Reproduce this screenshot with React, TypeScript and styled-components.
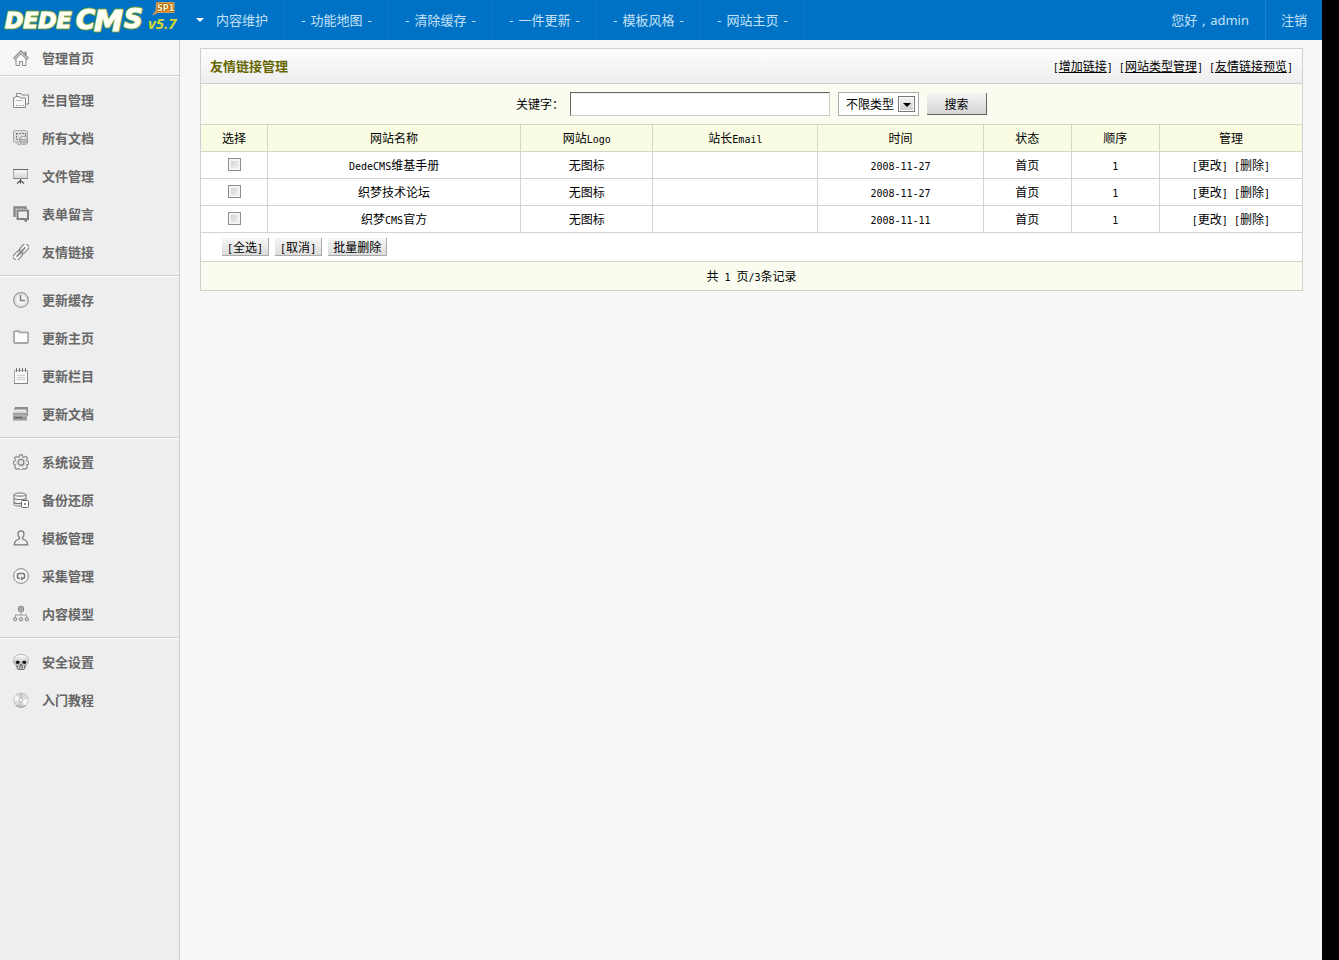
import React from "react";
import styled, { createGlobalStyle } from "styled-components";

const UI = `"Noto Sans", "Noto Sans CJK SC", sans-serif`;
const SONG = `"Noto Sans CJK SC", sans-serif`;

const GlobalStyle = createGlobalStyle`
  *, *::before, *::after { box-sizing: border-box; }
  body { margin: 0; background: #f7f7f7; font: 12px/18px ${SONG}; color: #000; }
  a { color: inherit; text-decoration: none; }
  button, input, select { font: inherit; color: inherit; margin: 0; }
`;

const Page = styled.div`
  display: grid;
  grid-template-columns: 1fr 17px;
  min-height: 100vh;
`;

const Gutter = styled.div`
  background: #000;
`;

const Shell = styled.div`
  display: grid;
  grid-template-columns: 180px 1fr;
  grid-template-rows: 40px 1fr;
  min-width: 0;
`;

const Header = styled.header`
  grid-column: 1 / -1;
  display: flex;
  background: #0072c6;
  color: #c5e1f5;
  font: 13px/40px ${UI};
`;

const LogoLink = styled.a`
  width: 180px;
  height: 40px;
  flex: none;
  svg { display: block; }
`;

const Nav = styled.nav`
  display: flex;
  flex: 1;
`;

const NavItem = styled.a`
  display: flex;
  align-items: center;
  justify-content: center;
  gap: ${(p: { $first?: boolean }) => (p.$first ? "12px" : "5px")};
  min-width: 104px;
  padding: 0 16px;
  border-right: 1px solid #0a7bce;
  white-space: nowrap;
`;

const Caret = styled.span`
  border: 4px solid transparent;
  border-top-color: #fff;
  border-bottom: 0;
`;

const UserArea = styled.div`
  display: flex;
  white-space: nowrap;
`;

const UserText = styled.span`
  padding: 0 16px;
`;

const Comma = styled.span`
  display: inline-block;
  width: 13px;
  text-align: center;
`;

const LogoutLink = styled.a`
  padding: 0 15px;
  border-left: 1px solid #1a80cc;
`;

const Sidebar = styled.aside`
  background: #eee;
  border-right: 1px solid #ccc;
  font: bold 13px/20px ${UI};
  color: #666;
`;

const MenuGroup = styled.ul<{ $home?: boolean; $last?: boolean }>`
  list-style: none;
  margin: 0;
  padding: ${(p) => (p.$home ? "0" : "4px 0")};
  background: ${(p) => (p.$home ? "#f7f7f7" : "transparent")};
  border-top: ${(p) => (p.$home ? "0" : "1px solid #fff")};
  border-bottom: ${(p) => (p.$last ? "0" : "1px solid #ccc")};
`;

const MenuLink = styled.a<{ $home?: boolean }>`
  display: flex;
  align-items: center;
  gap: 13px;
  height: ${(p) => (p.$home ? "35px" : "38px")};
  padding-left: 13px;
  svg { flex: none; }
`;

const Main = styled.main`
  padding: 8px 19px 20px 20px;
  min-width: 0;
  background: #f7f7f7;
`;

const Panel = styled.section`
  border: 1px solid #d0d0d0;
  background: #fff;
`;

const PanelHead = styled.div`
  display: flex;
  align-items: center;
  justify-content: space-between;
  height: 35px;
  padding: 0 9px;
  background: linear-gradient(#fdfdfd, #eee);
  border-bottom: 1px solid #d0d0d0;
`;

const Title = styled.h1`
  margin: 0;
  font: bold 13px/20px ${SONG};
  color: #660;
`;

const HeadLinks = styled.div`
  display: flex;
  gap: 6px;
  a { text-decoration: underline; }
`;

const SearchBar = styled.form`
  display: flex;
  align-items: center;
  justify-content: center;
  height: 41px;
  gap: 8px;
  background: #f9fcef;
  border-bottom: 1px solid #d3d8ca;
`;

const KeywordLabel = styled.label`
  display: flex;
  align-items: center;
  gap: 6px;
`;

const KeywordInput = styled.input`
  width: 260px;
  height: 24px;
  padding: 0 4px;
  background: #fff;
  border: 1px solid #ccc;
  border-top-color: #666;
  border-left-color: #666;
  box-shadow: inset 0 1px 0 #eee;
  outline: none;
`;

const SelectBox = styled.div`
  position: relative;
  width: 81px;
  height: 24px;
`;

const TypeSelect = styled.select`
  appearance: none;
  width: 100%;
  height: 100%;
  padding: 0 20px 0 7px;
  background: #fff;
  border: 1px solid #aaa;
  border-radius: 0;
`;

const SelectArrow = styled.span`
  position: absolute;
  top: 4px;
  right: 4px;
  display: flex;
  align-items: center;
  justify-content: center;
  width: 17px;
  height: 16px;
  padding-top: 2px;
  border: 1px solid #777;
  background: linear-gradient(#f4f4f4, #ccc);
  box-shadow: inset 0 0 0 1px #fff;
  pointer-events: none;
  &::after {
    content: "";
    border: 4px solid transparent;
    border-top-color: #000;
    border-bottom: 0;
  }
`;

const SearchButton = styled.button`
  width: 60px;
  height: 22px;
  padding: 0;
  background: linear-gradient(#f6f6f6, #d4d4d4);
  border: solid #666;
  border-width: 0 1px 1px 0;
`;

const LinkTable = styled.table`
  width: 100%;
  table-layout: fixed;
  border-collapse: separate;
  border-spacing: 0;
  text-align: center;
  th, td {
    height: 27px;
    padding: 0;
    font-weight: normal;
    border-bottom: 1px solid #d3d3d3;
    border-right: 1px solid #d3d3d3;
  }
  th { background: #f9fbe3; border-color: #d3d8ca; }
  th:last-child, td:last-child { border-right: 0; }
`;

const Col = styled.col<{ $width: string }>`
  width: ${(p) => p.$width};
`;

const Check = styled.input`
  appearance: none;
  display: block;
  width: 13px;
  height: 13px;
  margin: 0 auto 1px;
  border: 1px solid #8e8f8f;
  background: linear-gradient(135deg, #ccc, #f6f6f6);
  box-shadow: inset 0 0 0 2px #f4f4f4;
  &:checked { background: #678; }
`;

const RowActions = styled.span`
  display: inline-flex;
  gap: 6px;
`;

const BatchBar = styled.div`
  display: flex;
  align-items: center;
  gap: 6px;
  height: 29px;
  padding-left: 21px;
  border-bottom: 1px solid #d3d8ca;
`;

const BatchButton = styled.button`
  height: 18px;
  padding: 0 5px;
  line-height: 16px;
  background: linear-gradient(#f6f6f6, #dcdcdc);
  border: solid #aaa;
  border-width: 0 1px 1px 0;
`;

const Pager = styled.div`
  display: flex;
  align-items: center;
  justify-content: center;
  height: 28px;
  background: #f9fcef;
`;

const Latin = styled.span`
  font-family: "DejaVu Sans Mono", monospace;
  font-size: 10px;
  line-height: 0;
  white-space: pre;
`;

/* Sets half-width characters in a mono face that is half as wide as a 12px ideograph. */
function Mixed({ children }: { children: string }) {
  const parts = children.split(/([\x20-\x7e]+)/).filter(Boolean);
  return (
    <span>
      {parts.map((part, i) =>
        /^[\x20-\x7e]/.test(part) ? <Latin key={i}>{part}</Latin> : part
      )}
    </span>
  );
}

function BracketLink({ children }: { children: string }) {
  return (
    <span>
      <Latin>[</Latin>
      <a href="#">{children}</a>
      <Latin>]</Latin>
    </span>
  );
}

function LogoWord() {
  return (
    <>
      <text x="5" y="28" fontSize="22">DEDE</text>
      <text x="76" y="29" fontSize="26">C</text>
      <text x="94" y="31" fontSize="29">M</text>
      <text x="124" y="28" fontSize="26">S</text>
    </>
  );
}

function Logo() {
  return (
    <svg width="180" height="40" viewBox="0 0 180 40" role="img" aria-label="DEDECMS v5.7 SP1">
      <g
        fontFamily="DejaVu Sans, sans-serif"
        fontWeight="bold"
        fontStyle="italic"
        fill="#fffef2"
        stroke="#6b9a3c"
        strokeWidth="3"
        paintOrder="stroke"
        strokeLinejoin="round"
      >
        <LogoWord />
      </g>
      <g
        aria-hidden="true"
        fontFamily="DejaVu Sans, sans-serif"
        fontWeight="bold"
        fontStyle="italic"
        fill="#fffef2"
        stroke="#fffef2"
        strokeWidth="1"
      >
        <LogoWord />
      </g>
      <text x="148" y="29" fontFamily="Open Sans, sans-serif" fontSize="15" fontWeight="bold" fontStyle="italic" fill="#d3d92f">
        v5.7
      </text>
      <path d="M156.500 2.500h17.500v10h-16.500l-4.500 2.500 3-4z" fill="#f08a1d" stroke="#c9a35a" />
      <text x="157" y="10.500" fontFamily="DejaVu Sans, sans-serif" fontSize="8" fontWeight="bold" fill="#fff3c4" stroke="#7a4a10" strokeWidth="1" paintOrder="stroke">
        SP1
      </text>
    </svg>
  );
}

const icons: Record<string, React.ReactNode> = {
  home: (
    <>
      <path d="M3 8.500V15.500h3.500v-4h3v4H13V8.500L8 3.500z" fill="#fafafa" stroke="#888" />
      <path d="M12.500 1.500v4" stroke="#888" strokeWidth="2" />
      <path d="M1 9 8 2l7 7" stroke="#808080" strokeWidth="3" />
      <path d="M1.500 8.700 8 2.300l6.500 6.400" stroke="#d4d4d4" strokeWidth="1.200" />
    </>
  ),
  folders: (
    <>
      <path d="M3.500 5V1.500H8l1 1.500h6.500v9H13" fill="#f4f4f4" stroke="#888" />
      <path d="M.5 15.500v-10H2l.5-1h4l.8 1.500h5.200v9.500z" fill="#f8f8f8" stroke="#888" />
      <path d="M3 8.500h7" stroke="#bbb" />
      <path d="M3 13.500h2m1.500 0h1.500m1.500 0h1.500" stroke="#999" />
    </>
  ),
  docs: (
    <>
      <rect x=".5" y=".5" width="14" height="11.500" rx="1" fill="#ddd" stroke="#aaa" />
      <path d="M3 3.500h10M3.500 3v6.500h4M12.500 4v3" stroke="#777" strokeDasharray="2 1" />
      <path d="M7 8v4.500c0 2.500 7.500 2.500 7.500 0V8" fill="#ccc" stroke="#999" />
      <ellipse cx="10.700" cy="8" rx="3.700" ry="1.500" fill="#eee" stroke="#888" strokeWidth=".8" />
      <path d="M3 12.500c1 1.500 2.500 2 4.500 2M7 11c1 1.300 6 1.300 7.500 0" stroke="#999" />
    </>
  ),
  screen: (
    <>
      <rect x=".5" y="1.500" width="14" height="9" fill="url(#panelShade)" stroke="#aaa" />
      <path d="M0 1.500h15" stroke="#666" />
      <path d="M0 10.500h15" stroke="#888" />
      <path d="M7.500 11v4.500M7.500 12.500 4 15.500M7.500 12.500l3.500 3" stroke="#555" strokeWidth="1.200" />
    </>
  ),
  comments: (
    <>
      <path d="M1.500 11V1.500h11v1.500" stroke="#888" strokeWidth="2.500" />
      <path d="M4.500 4.500h10.500v8.500h-2v2l-2-2H4.500z" fill="#eee" stroke="#808080" strokeWidth="2" />
    </>
  ),
  link: (
    <g transform="rotate(-47 8 8)">
      <rect x="-1.500" y="4.800" width="9.500" height="6.400" rx="2" fill="#fafafa" stroke="#777" />
      <rect x="8" y="4.800" width="9.500" height="6.400" rx="2" fill="#fafafa" stroke="#777" />
      <path d="M1.500 8h13" stroke="#888" strokeWidth="1.800" />
      <path d="M5 6.300h6M5 9.700h6" stroke="#999" strokeWidth=".8" />
    </g>
  ),
  clock: (
    <>
      <circle cx="8" cy="8" r="7.300" fill="#f3f3f3" stroke="#999" strokeWidth="1.300" />
      <circle cx="8" cy="8" r="5.500" stroke="#ddd" />
      <path d="M7.500 3v5.500H12" stroke="#808080" strokeWidth="1.500" />
    </>
  ),
  folder: (
    <path d="M1 12.500V2.500Q1 1.200 2.200 1.200H5.500q1 0 1 1.200h7.500q1.200 0 1.200 1.300v8q0 1.300-1.300 1.300H2.300Q1 13 1 12.500z" fill="#fdfdfd" stroke="#a6a6a6" strokeWidth="1.800" />
  ),
  notepad: (
    <>
      <path d="M1.500 2.500h13v13h-13z" fill="#f8f8f8" stroke="#aaa" />
      <path d="M1 15.500h14M14.500 4v12" stroke="#888" />
      <path d="M3.500 0v4M6.500 0v4M9.500 0v4M12.500 0v4" stroke="#777" />
      <path d="M4 7.500h8M4 9.500h8M4 11.500h8" stroke="#ccc" />
    </>
  ),
  cards: (
    <>
      <path d="M2 1h13v9h-2V4H1z" fill="#8c8c8c" />
      <path d="M2.500 3.500H14" stroke="#bbb" />
      <rect x="0" y="5" width="14" height="9.500" fill="#999" />
      <path d="M0 6h14" stroke="#eee" strokeWidth="1.500" />
      <path d="M0 9.500h14" stroke="#b4b4b4" strokeWidth="2" />
      <path d="M1.500 11.500h7.500" stroke="#5c5c5c" strokeWidth="1.300" />
    </>
  ),
  gear: (
    <>
      <path d="M6.700.8h2.600l.5 2 1.200.5 1.800-1 1.800 1.900-1 1.700.5 1.200 1.600.4v2.600l-1.700.5-.5 1.200.9 1.700-1.900 1.800-1.600-.9-1.200.5-.4 1.200H6.700l-.4-1.200-1.300-.5-1.700.9-1.700-1.800.8-1.700-.4-1.200-1.400-.5V7.500l1.400-.4.5-1.300-.9-1.600 1.800-1.900 1.700 1 1.200-.5z" fill="#f4f4f4" stroke="#8c8c8c" strokeWidth="1.200" />
      <circle cx="8" cy="8.300" r="3" fill="#e4e4e4" stroke="#808080" strokeWidth="1.200" />
      <circle cx="8" cy="8.300" r="4.500" stroke="#ccc" strokeWidth=".8" />
    </>
  ),
  database: (
    <>
      <path d="M1 2.500C1 .5 13 .5 13 2.500v10c0 1-2 1.500-6 1.500S1 13.500 1 12.500z" fill="#f4f4f4" stroke="#777" />
      <path d="M1 3c1 1.500 11 1.500 12 0M1 6.500c1 1.300 11 1.300 12 0M1 10.500c1 1 4 1.200 7 1" stroke="#777" strokeWidth="1.200" />
      <rect x="8.500" y="8.500" width="7" height="7" rx="1" fill="#fff" stroke="#666" />
      <rect x="11.200" y="11.200" width="1.600" height="1.600" fill="#555" />
    </>
  ),
  user: (
    <path d="M8 .800c2 0 3 1.400 3 3.400 0 1.600-.8 2.600-1.500 3.300v1.300c1 .8 3.800 1.200 4.500 3l.7 3H1.300l.7-3c.7-1.800 3.500-2.200 4.500-3V7.500C5.800 6.800 5 5.800 5 4.200 5 2.200 6 .8 8 .8z" fill="#eee" stroke="#777" strokeWidth="1.200" />
  ),
  collect: (
    <>
      <circle cx="8" cy="8" r="7.400" fill="#f6f6f6" stroke="#888" />
      <path d="M7 10.500H6q-1.500 0-1.500-1.500V7q0-1.500 1.500-1.500h4q1.500 0 1.500 1.500v2q0 1.500-1.500 1.500H9" stroke="#777" strokeWidth="1.600" />
      <path d="M8 8.200v4.600l2.500-2.300z" fill="#777" />
    </>
  ),
  tree: (
    <>
      <rect x="5.500" y=".5" width="5" height="5" rx="1" fill="#aaa" stroke="#888" />
      <path d="M8 6v3M2.500 11V9h11v2" stroke="#999" />
      <rect x=".7" y="11.700" width="3" height="3" rx="1" fill="#ddd" stroke="#777" />
      <rect x="6.500" y="11.700" width="3" height="3" rx="1" fill="#ddd" stroke="#777" />
      <rect x="12.300" y="11.700" width="3" height="3" rx="1" fill="#ddd" stroke="#777" />
    </>
  ),
  skull: (
    <>
      <path d="M8 .5c5 0 7.500 2.500 7.500 6 0 2-.5 3.700-2.500 4.300l-.5 3.200c-1 1.800-8 1.800-9 0L3 10.800C1 10.200.5 8.500.5 6.500.5 3 3 .5 8 .5z" fill="url(#skullShade)" stroke="#aaa" strokeWidth=".8" />
      <path d="M2.800 7.500c.8-1 3.400-.8 3.800.3s-.8 2.200-2 2.200-2.300-1.200-1.800-2.500zM13.200 7.500c-.8-1-3.400-.8-3.800.3s.8 2.200 2 2.200 2.300-1.200 1.800-2.500zM8 9.700 7 11.500h2z" fill="#111" />
      <path d="M3.500 12c2 1.500 7 1.500 9 0" stroke="#555" />
      <path d="M4 14.500c1.500 1.300 6.500 1.300 8 0" stroke="#666" />
      <path d="M5.500 12v2.500M8 12.500v2.500M10.500 12v2.500" stroke="#eee" strokeWidth=".8" />
    </>
  ),
  disc: (
    <>
      <circle cx="8" cy="8" r="7" fill="#dcdcdc" stroke="#bbb" />
      <path d="M8 8 3 3.200A7 7 0 0 0 1.500 9zM8 8l6.500-1A6.800 6.800 0 0 1 12 13.500z" fill="#f8f8f8" />
      <path d="M8 8 6 1.500A7 7 0 0 1 10 1.500zM8 8l-3 6q2 1 4 .7z" fill="#c4c4c4" />
      <circle cx="8" cy="8" r="2" fill="#f4f4f4" stroke="#bbb" />
      <path d="M3 13.500q5 3.500 10 0" stroke="#999" />
    </>
  ),
};

function Icon({ name }: { name: string }) {
  return (
    <svg width="16" height="16" viewBox="0 0 16 16" fill="none" aria-hidden="true">
      <defs>
        <linearGradient id="panelShade" x2="0" y2="1">
          <stop stopColor="#fafafa" />
          <stop offset="1" stopColor="#d4d4d4" />
        </linearGradient>
        <linearGradient id="skullShade" x2="0" y2="1">
          <stop stopColor="#fff" />
          <stop offset=".5" stopColor="#ccc" />
          <stop offset="1" stopColor="#999" />
        </linearGradient>
      </defs>
      {icons[name]}
    </svg>
  );
}

const groups: [string, string][][] = [
  [["home", "管理首页"]],
  [["folders", "栏目管理"], ["docs", "所有文档"], ["screen", "文件管理"], ["comments", "表单留言"], ["link", "友情链接"]],
  [["clock", "更新缓存"], ["folder", "更新主页"], ["notepad", "更新栏目"], ["cards", "更新文档"]],
  [["gear", "系统设置"], ["database", "备份还原"], ["user", "模板管理"], ["collect", "采集管理"], ["tree", "内容模型"]],
  [["skull", "安全设置"], ["disc", "入门教程"]],
];

const navItems = ["功能地图", "清除缓存", "一件更新", "模板风格", "网站主页"];

const columns: [string, string][] = [
  ["选择", "67px"],
  ["网站名称", "23%"],
  ["网站Logo", "12%"],
  ["站长Email", "15%"],
  ["时间", "15%"],
  ["状态", "8%"],
  ["顺序", "8%"],
  ["管理", "auto"],
];

const rows = [
  { name: "DedeCMS维基手册", date: "2008-11-27" },
  { name: "织梦技术论坛", date: "2008-11-27" },
  { name: "织梦CMS官方", date: "2008-11-11" },
];

export default function App() {
  return (
    <>
      <GlobalStyle />
      <Page>
        <Shell>
          <Header>
            <LogoLink href="#"><Logo /></LogoLink>
            <Nav>
              <NavItem href="#" $first><Caret />内容维护</NavItem>
              {navItems.map((item) => (
                <NavItem href="#" key={item}>
                  <span>-</span>
                  <span>{item}</span>
                  <span>-</span>
                </NavItem>
              ))}
            </Nav>
            <UserArea>
              <UserText>您好<Comma>,</Comma>admin</UserText>
              <LogoutLink href="#">注销</LogoutLink>
            </UserArea>
          </Header>
          <Sidebar>
            {groups.map((group, i) => (
              <MenuGroup key={i} $home={i === 0} $last={i === groups.length - 1}>
                {group.map(([icon, label]) => (
                  <li key={label}>
                    <MenuLink href="#" $home={i === 0}>
                      <Icon name={icon} />
                      {label}
                    </MenuLink>
                  </li>
                ))}
              </MenuGroup>
            ))}
          </Sidebar>
          <Main>
            <Panel>
              <PanelHead>
                <Title>友情链接管理</Title>
                <HeadLinks>
                  <BracketLink>增加链接</BracketLink>
                  <BracketLink>网站类型管理</BracketLink>
                  <BracketLink>友情链接预览</BracketLink>
                </HeadLinks>
              </PanelHead>
              <SearchBar onSubmit={(e) => e.preventDefault()}>
                <KeywordLabel>
                  关键字：
                  <KeywordInput type="text" name="keyword" />
                </KeywordLabel>
                <SelectBox>
                  <TypeSelect name="type" aria-label="类型">
                    <option>不限类型</option>
                  </TypeSelect>
                  <SelectArrow />
                </SelectBox>
                <SearchButton type="submit">搜索</SearchButton>
              </SearchBar>
              <LinkTable>
                <colgroup>
                  {columns.map(([label, width]) => <Col key={label} $width={width} />)}
                </colgroup>
                <thead>
                  <tr>
                    {columns.map(([label]) => (
                      <th key={label} scope="col"><Mixed>{label}</Mixed></th>
                    ))}
                  </tr>
                </thead>
                <tbody>
                  {rows.map((row) => (
                    <tr key={row.name}>
                      <td><Check type="checkbox" aria-label={row.name} /></td>
                      <td><Mixed>{row.name}</Mixed></td>
                      <td>无图标</td>
                      <td />
                      <td><Mixed>{row.date}</Mixed></td>
                      <td>首页</td>
                      <td><Mixed>1</Mixed></td>
                      <td>
                        <RowActions>
                          <a href="#"><Mixed>[更改]</Mixed></a>
                          <a href="#"><Mixed>[删除]</Mixed></a>
                        </RowActions>
                      </td>
                    </tr>
                  ))}
                </tbody>
              </LinkTable>
              <BatchBar>
                <BatchButton type="button"><Mixed>[全选]</Mixed></BatchButton>
                <BatchButton type="button"><Mixed>[取消]</Mixed></BatchButton>
                <BatchButton type="button">批量删除</BatchButton>
              </BatchBar>
              <Pager><Mixed>共 1 页/3条记录</Mixed></Pager>
            </Panel>
          </Main>
        </Shell>
        <Gutter />
      </Page>
    </>
  );
}
